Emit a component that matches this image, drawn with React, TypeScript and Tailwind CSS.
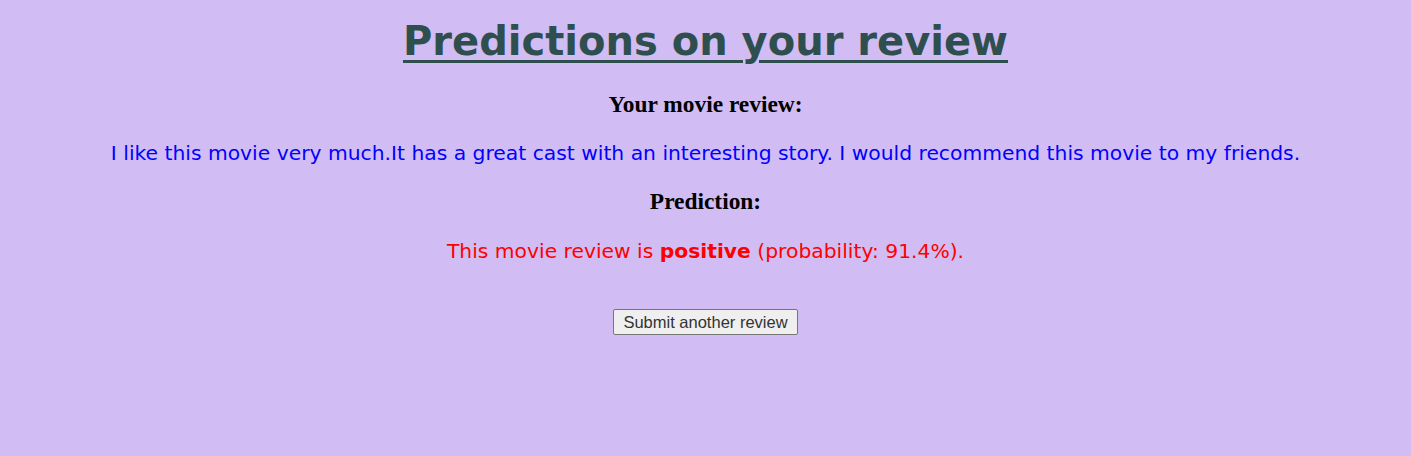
export default function App() {
  return (
    <div className="min-h-[456px] bg-[#d1bdf3] text-center">
      <h1 className="pt-[13px] font-['Verdana','DejaVu_Sans',sans-serif] text-[40px] font-bold leading-[56px] text-[#2f4f4f] underline decoration-[3px] underline-offset-[5px]">
        Predictions on your review
      </h1>
      <h3 className="mt-[21px] font-['Liberation_Serif',serif] text-[23.4px] font-bold leading-[28px] text-black">
        Your movie review:
      </h3>
      <p className="mt-[21px] font-['DejaVu_Sans',sans-serif] text-[20.3px] leading-[28px] text-[#0000ff]">
        I like this movie very much.It has a great cast with an interesting story. I would recommend this movie to my friends.
      </p>
      <h3 className="mt-[20px] font-['Liberation_Serif',serif] text-[23.4px] font-bold leading-[28px] text-black">
        Prediction:
      </h3>
      <p className="mt-[22px] font-['DejaVu_Sans',sans-serif] text-[20.3px] leading-[28px] text-[#ff0000]">
        This movie review is <b>positive</b> (probability: 91.4%).
      </p>
      <div className="mt-[44px] flex justify-center">
        <button
          type="button"
          className="h-[26px] rounded-[2px] border border-[#767676] bg-[#efefef] px-[9px] font-['Liberation_Sans',sans-serif] text-[16.5px] leading-[20px] text-[#333]"
        >
          Submit another review
        </button>
      </div>
    </div>
  );
}
